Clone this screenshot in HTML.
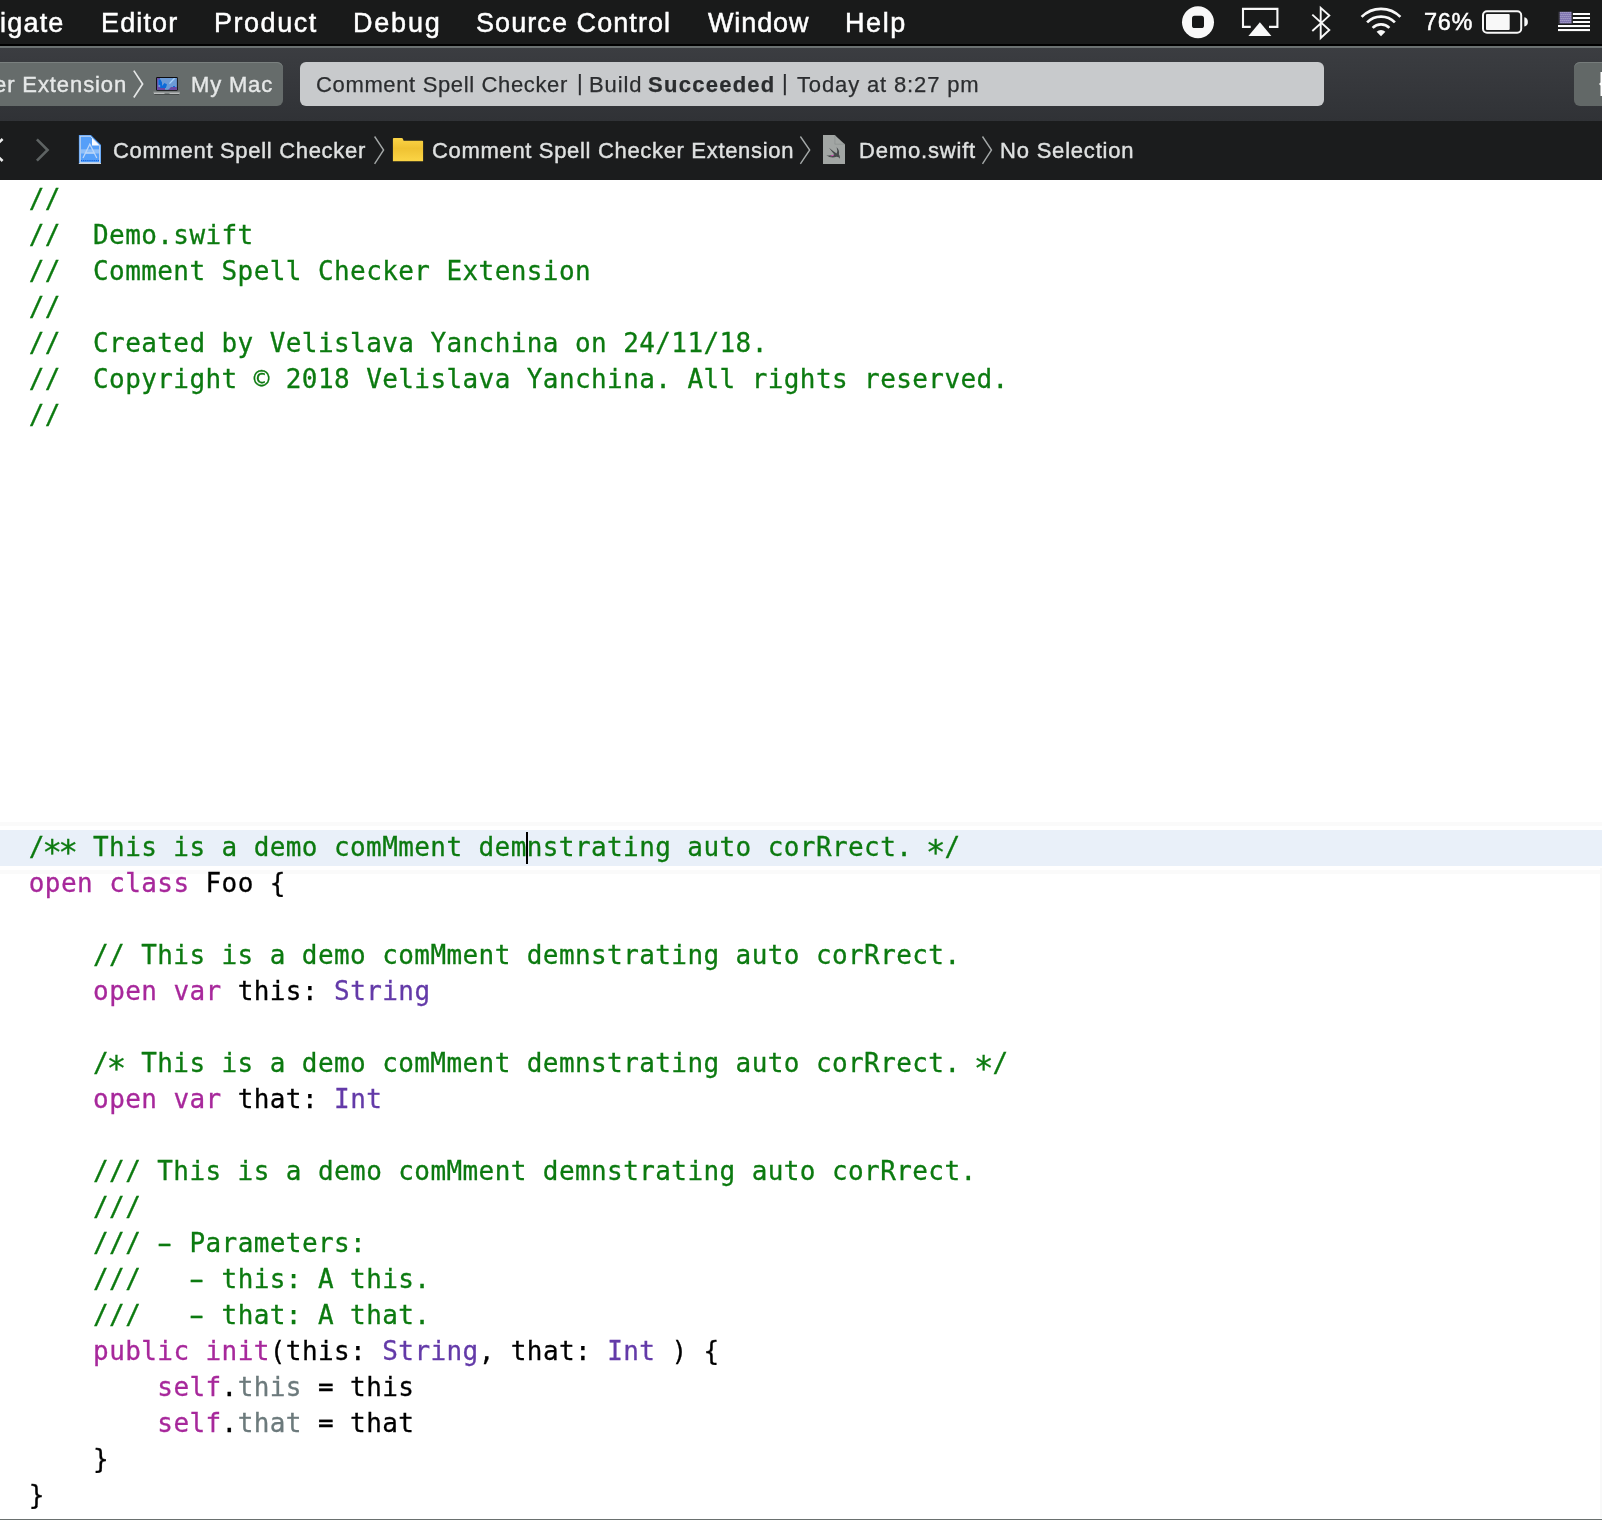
<!DOCTYPE html>
<html><head><meta charset="utf-8"><title>Demo.swift</title>
<style>
html,body{margin:0;padding:0;}
body{width:1602px;height:1520px;overflow:hidden;position:relative;background:#fff;font-family:"Liberation Sans",sans-serif;}
.abs{position:absolute;white-space:pre;}
#menubar{left:0;top:0;width:1602px;height:46px;background:linear-gradient(#191a1a 0,#191a1a 44px,#000 44.5px,#000 46px);}
#menuline{left:0;top:46px;width:1602px;height:2px;background:#6b7171;}
#toolbar{left:0;top:48px;width:1602px;height:73px;background:linear-gradient(#3b3d41,#303236);}
#jumpbar{left:0;top:121px;width:1602px;height:59px;background:#1b1c1d;}
.menu{top:0;height:46px;line-height:46px;font-size:27px;color:#fff;will-change:transform;-webkit-text-stroke:0.5px;}
#scheme{left:-10px;top:62px;width:293px;height:44px;border-radius:6px;background:#666c6b;box-shadow:inset 0 1px 0 #7a807f;}
#activity{left:300px;top:62px;width:1024px;height:44px;border-radius:6px;background:#c8cacc;}
#rbtn{left:1574px;top:62px;width:60px;height:44px;border-radius:6px;background:#626867;box-shadow:inset 0 1px 0 #767c7b;}
.tb{top:62px;height:44px;line-height:46px;font-size:22px;color:#e6e8e8;will-change:transform;-webkit-text-stroke:0.4px;}
.dk{color:#2b2d2f !important;-webkit-text-stroke:0.25px !important;}
.jb{top:121px;height:59px;line-height:60px;font-size:22px;color:#dfe1e1;will-change:transform;-webkit-text-stroke:0.4px;}
#code{-webkit-text-stroke:0.3px;will-change:transform;position:absolute;left:0;top:181px;width:1602px;font-family:"DejaVu Sans Mono","Liberation Mono",monospace;font-size:26px;letter-spacing:0.41px;line-height:36px;color:#000;}
#code div{height:36px;padding-left:28.8px;white-space:pre;}
.c{color:#0c7a10}.a{display:inline-block;width:16.062px;letter-spacing:0;font-size:33px;line-height:0;position:relative;top:8.3px;left:-2.7px;-webkit-text-stroke:0.3px;}.k{color:#a7289b}.t{color:#633aa8}.h{display:inline-block;transform:scaleX(1.7);}.p{color:#6c7a7c}
#hl{left:0;top:830px;width:1602px;height:36px;background:#e9f0f9;}
.fb{left:0;width:1602px;height:4px;background:#fafafa;}
#cursor{left:526px;top:832px;width:2px;height:32px;background:#000;}
#botline{left:0;top:1519px;width:1602px;height:1px;background:#6a706f;}
</style></head><body>
<div class="abs" id="menubar"></div>
<div class="abs" id="menuline"></div>
<div class="abs" id="toolbar"></div>
<div class="abs" id="jumpbar"></div>

<div class="abs menu" id="m0" style="left:0px;letter-spacing:1.2px">igate</div>
<div class="abs menu" id="m1" style="left:100.60px;letter-spacing:1.120px">Editor</div>
<div class="abs menu" id="m2" style="left:213.60px;letter-spacing:1.532px">Product</div>
<div class="abs menu" id="m3" style="left:352.80px;letter-spacing:1.800px">Debug</div>
<div class="abs menu" id="m4" style="left:475.60px;letter-spacing:1.077px">Source Control</div>
<div class="abs menu" id="m5" style="left:707.60px;letter-spacing:0.880px">Window</div>
<div class="abs menu" id="m6" style="left:845.00px;letter-spacing:1.599px">Help</div>
<div class="abs menu" id="m7" style="left:1424.2px;font-size:23.5px;letter-spacing:0.7px;line-height:44px">76%</div>

<div class="abs" id="scheme"></div>
<div class="abs" id="activity"></div>
<div class="abs" id="rbtn"></div>
<div class="abs tb" id="t0" style="left:-6.5px;letter-spacing:0.9px">er Extension</div>
<div class="abs tb" id="t1" style="left:190.80px;letter-spacing:0.840px">My Mac</div>
<div class="abs tb dk" id="t2" style="left:316.00px;letter-spacing:0.645px">Comment Spell Checker</div>
<div class="abs tb dk" id="t3" style="left:576.5px;top:60px">|</div>
<div class="abs tb dk" id="t4" style="left:589.10px;letter-spacing:0.875px">Build</div>
<div class="abs tb dk" id="t5" style="left:648.00px;letter-spacing:1.264px;font-weight:bold">Succeeded</div>
<div class="abs tb dk" id="t6" style="left:781.5px;top:60px">|</div>
<div class="abs tb dk" id="t7" style="left:797.20px;letter-spacing:0.861px">Today at 8:27 pm</div>

<div class="abs jb" id="j0" style="left:113.40px;letter-spacing:0.690px">Comment Spell Checker</div>
<div class="abs jb" id="j1" style="left:431.80px;letter-spacing:0.674px">Comment Spell Checker Extension</div>
<div class="abs jb" id="j2" style="left:858.5px;letter-spacing:0.82px">Demo.swift</div>
<div class="abs jb" id="j3" style="left:1000.3px;letter-spacing:0.8px">No Selection</div>

<svg class="abs" id="icons" style="left:0;top:0" width="1602" height="182" viewBox="0 0 1602 182">
<defs>
<pattern id="stars" x="1559.7" y="11.8" width="2" height="4" patternUnits="userSpaceOnUse"><rect width="2" height="4" fill="#43348c"/><rect x="0.25" y="0.2" width="1.25" height="1.25" fill="#fff"/><rect x="1.25" y="2.2" width="1.25" height="1.25" fill="#fff"/><rect x="-0.75" y="2.2" width="1.25" height="1.25" fill="#fff"/></pattern>
<linearGradient id="fold" x1="0" y1="0" x2="0" y2="1"><stop offset="0" stop-color="#fbd447"/><stop offset="0.45" stop-color="#efc232"/><stop offset="1" stop-color="#fbd546"/></linearGradient>
</defs>
<!-- record -->
<circle cx="1198" cy="22.2" r="16" fill="#f8f8f8"/><rect x="1192" y="15.8" width="12" height="12.2" rx="2.6" fill="#161717"/>
<!-- airplay -->
<path d="M1250.7,26.9 H1243 V8.9 H1277.4 V26.9 H1269" fill="none" stroke="#f8f8f8" stroke-width="2.1"/>
<path d="M1259.9,22.3 L1271.4,36 H1248.4 Z" fill="#f8f8f8"/>
<!-- bluetooth -->
<path d="M1312.3,14.6 L1329.3,30 L1320.7,38 V7.8 L1329.3,15.6 L1312.3,31" fill="none" stroke="#f8f8f8" stroke-width="1.9" stroke-linejoin="miter"/>
<!-- wifi -->
<g fill="none" stroke="#f8f8f8" stroke-width="2.7" stroke-linecap="butt">
<path d="M1361.6,16.9 A27.3,27.3 0 0 1 1400.4,16.9"/>
<path d="M1367.1,22.4 A19.6,19.6 0 0 1 1394.9,22.4"/>
<path d="M1372.6,27.9 A11.9,11.9 0 0 1 1389.4,27.9"/>
</g>
<path d="M1381,36.2 L1376.6,31.8 A6.2,6.2 0 0 1 1385.4,31.8 Z" fill="#f8f8f8"/>
<!-- battery -->
<rect x="1483" y="11.2" width="38.2" height="21.6" rx="4" fill="none" stroke="#f8f8f8" stroke-width="2"/>
<rect x="1486" y="14" width="23.7" height="16" rx="1" fill="#f8f8f8"/>
<path d="M1524.3,17.2 Q1527.9,18 1527.9,21.9 Q1527.9,25.8 1524.3,26.6 Z" fill="#f8f8f8"/>
<!-- flag -->
<rect x="1558" y="11.7" width="14.6" height="12.3" fill="#2a2a2e"/>
<rect x="1559.7" y="11.8" width="11.8" height="11.6" fill="url(#stars)"/>
<g fill="#fdfdfd"><rect x="1572.9" y="13" width="17.1" height="2"/><rect x="1572.9" y="17" width="17.1" height="2"/><rect x="1572.9" y="21" width="17.1" height="2"/><rect x="1558" y="25" width="32" height="2.1"/><rect x="1558" y="29" width="32" height="2.1"/></g>
<!-- toolbar chevron -->
<path d="M133.8,70.6 L142.6,84 L133.8,97.5" fill="none" stroke="#e4e6e6" stroke-width="1.7"/>
<!-- mac icon -->
<rect x="156.1" y="76.9" width="21.7" height="13.9" rx="1.2" fill="#0c0c10"/>
<rect x="157.1" y="78" width="19.8" height="11.9" fill="#6c9bd6"/>
<path d="M157.1,78 H160 V79.5 H158.3 V89.9 H157.1 Z M158.3,87 H165 V89.9 H158.3 Z M168,89.9 L171,87 H176.9 V89.9 Z" fill="#6b4aa3"/>
<path d="M158.5,79.5 H160.5 L162,82.5 V86 L164.5,83 L167,84.5 L165.8,88 H160.2 V85 H158.5 Z" fill="#0c6bd9"/>
<path d="M169,83.3 L173.5,78.3 H175.5 L170,84 Z" fill="#a6d3fb"/>
<rect x="173" y="86" width="2" height="1" fill="#0c6bd9"/>
<rect x="153.4" y="91.6" width="26.6" height="1.2" fill="#8f9494"/>
<rect x="153.9" y="92.8" width="25.6" height="1.1" fill="#d5d8d8"/>
<rect x="164.5" y="92.8" width="5" height="1.1" fill="#7b8080"/>
<rect x="154.4" y="93.9" width="24.6" height="0.8" fill="#3a3d3d"/>
<!-- rbtn glyph -->
<path d="M1599,84 L1600.5,82.5 V72 H1602 V96 H1600.5 V85.5 Z" fill="#fff"/>
<!-- nav arrows -->
<path d="M2.6,139 L-9,150 L2.6,161" fill="none" stroke="#ececec" stroke-width="2.6"/>
<path d="M36.9,139.3 L47.6,150 L36.9,160.7" fill="none" stroke="#5e6363" stroke-width="2.6"/>
<!-- project icon -->
<path d="M78.9,134.9 H90.9 L101,145 V164 H78.9 Z" fill="#559ff9"/>
<path d="M80.2,136.2 H90.2 L99.7,145.6 V162.7 H80.2 Z" fill="none" stroke="#dfe3ea" stroke-width="0.9"/>
<path d="M92,138.3 L99.3,145.5 H92 Z" fill="#fafcff"/>
<rect x="81" y="149.3" width="18" height="4.2" fill="#8fc0fa"/>
<path d="M83,158 L89.8,144.3 L96.8,158 M85.5,153 H94.5" fill="none" stroke="#bcd6f8" stroke-width="1.3"/>
<path d="M81,160.6 H99" stroke="#0b5bd8" stroke-width="1" stroke-dasharray="1.2 0.9"/>
<rect x="78.9" y="163" width="22.1" height="1" fill="#cfd2d6"/>
<!-- chevrons jump bar -->
<g fill="none" stroke="#a4a8a8" stroke-width="1.4">
<path d="M374.6,136.5 L383.6,150 L374.6,163.8"/>
<path d="M800.4,136.5 L809.7,150 L800.4,163.8"/>
<path d="M982.5,136.5 L991.5,150 L982.5,163.8"/>
</g>
<!-- folder -->
<path d="M392.9,138.8 Q392.9,137.9 393.8,137.9 H401.6 Q402.4,137.9 402.8,138.6 L403.6,140.7 H422.2 Q423.1,140.7 423.1,141.6 V161.3 H392.9 Z" fill="url(#fold)"/>
<!-- swift file -->
<path d="M823,135 H834.7 L845,144.4 V163.9 H823 Z" fill="#a2a6a4"/>
<path d="M834.9,135.4 V144.2 H844.6" fill="none" stroke="#8d9290" stroke-width="0.8"/>
<path d="M826.3,155.2 Q831,158.6 836.5,156.8 Q838.8,156.7 840,158.8 Q840.3,156.4 838.9,154.3 Q839.8,150.3 836.6,147.2 Q838,151 836.6,153.6 Q832.5,150.8 829,147.8 Q831.5,151.5 834.4,154.4 Q830.5,155.9 826.3,155.2 Z" fill="#45484a"/>
<path d="M830.2,156.2 Q832,154.6 834,155 Q833.4,156.6 830.2,156.2 Z" fill="#e04fc2"/>
</svg>
<div class="abs" id="hl"></div>
<div class="abs fb" style="top:822px"></div><div class="abs fb" style="top:870px"></div><div class="abs" style="left:1600px;top:868px;width:2px;height:650px;background:#f9f9f9"></div>
<div id="code">
<div class="c">//</div>
<div class="c">//  Demo.swift</div>
<div class="c">//  Comment Spell Checker Extension</div>
<div class="c">//</div>
<div class="c">//  Created by Velislava Yanchina on 24/11/18.</div>
<div class="c">//  Copyright © 2018 Velislava Yanchina. All rights reserved.</div>
<div class="c">//</div>
<div> </div><div> </div><div> </div><div> </div><div> </div><div> </div><div> </div><div> </div><div> </div><div> </div><div> </div>
<div class="c" id="L19">/<span class="a">*</span><span class="a">*</span> This is a demo comMment demnstrating auto corRrect. <span class="a">*</span>/</div>
<div><span class="k">open</span> <span class="k">class</span> Foo {</div>
<div> </div>
<div class="c">    // This is a demo comMment demnstrating auto corRrect.</div>
<div>    <span class="k">open</span> <span class="k">var</span> this: <span class="t">String</span></div>
<div> </div>
<div class="c">    /<span class="a">*</span> This is a demo comMment demnstrating auto corRrect. <span class="a">*</span>/</div>
<div>    <span class="k">open</span> <span class="k">var</span> that: <span class="t">Int</span></div>
<div> </div>
<div class="c">    /// This is a demo comMment demnstrating auto corRrect.</div>
<div class="c">    ///</div>
<div class="c">    /// <span class="h">-</span> Parameters:</div>
<div class="c">    ///   <span class="h">-</span> this: A this.</div>
<div class="c">    ///   <span class="h">-</span> that: A that.</div>
<div>    <span class="k">public</span> <span class="k">init</span>(this: <span class="t">String</span>, that: <span class="t">Int</span> ) {</div>
<div>        <span class="k">self</span>.<span class="p">this</span> = this</div>
<div>        <span class="k">self</span>.<span class="p">that</span> = that</div>
<div>    }</div>
<div>}</div>
</div>
<div class="abs" id="cursor"></div>
<div class="abs" id="botline"></div>
</body></html>
